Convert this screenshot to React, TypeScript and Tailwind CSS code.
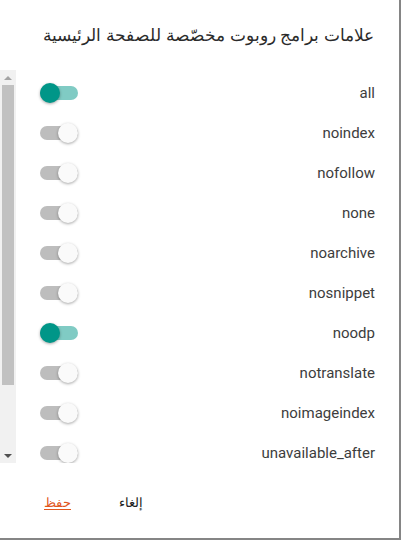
import { useState } from "react";

const tags: Array<readonly [string, boolean]> = [
  ["all", true],
  ["noindex", false],
  ["nofollow", false],
  ["none", false],
  ["noarchive", false],
  ["nosnippet", false],
  ["noodp", true],
  ["notranslate", false],
  ["noimageindex", false],
  ["unavailable_after", false],
];

function Toggle({ on, onClick }: { on: boolean; onClick: () => void }) {
  return (
    <button
      type="button"
      onClick={onClick}
      className={`relative h-[14px] w-[38px] shrink-0 rounded-full ${on ? "bg-[#80cbc4]" : "bg-[#bdbdbd]"}`}
    >
      <span
        className={`absolute top-[-3px] h-[20px] w-[20px] rounded-full shadow-[0_1px_3px_rgba(0,0,0,0.35)] ${
          on ? "left-0 bg-[#009688]" : "right-0 bg-[#fafafa]"
        }`}
      />
    </button>
  );
}

export default function App() {
  const [state, setState] = useState(tags.map(([, v]) => v));

  return (
    <div className="h-[540px] w-[402px] bg-white">
      <div
        dir="rtl"
        className="flex h-[540px] w-[401px] flex-col border-r-2 border-b-2 border-[#858585] bg-white"
      >
        <h2 className="whitespace-nowrap pr-[25px] pt-[22px] text-[17px] leading-[28px] text-[#2b2b2b] [font-family:'Liberation_Sans',Arial,sans-serif]">
          علامات برامج روبوت مخصّصة للصفحة الرئيسية
        </h2>

        <div className="mt-[20px] flex h-[393px] flex-row">
          <div className="flex-1 overflow-hidden pt-[3px]">
            {tags.map(([label], i) => (
              <div key={label} className="flex h-[40px] items-center justify-between pr-[24px] pl-[24px]">
                <span className="text-[15px] text-[#3d3d3d] [font-family:Roboto,sans-serif]">{label}</span>
                <Toggle
                  on={state[i]}
                  onClick={() => setState((s) => s.map((v, j) => (j === i ? !v : v)))}
                />
              </div>
            ))}
          </div>
          {/* scrollbar (left side in rtl) */}
          <div className="flex w-[16px] shrink-0 flex-col bg-[#f1f1f1]">
            <div className="flex h-[15px] items-center justify-center">
              <span className="h-0 w-0 border-x-[4px] border-b-[4px] border-x-transparent border-b-[#a3a3a3]" />
            </div>
            <div className="mx-[2px] h-[300px] bg-[#c1c1c1]" />
            <div className="flex-1" />
            <div className="flex h-[15px] items-center justify-center">
              <span className="h-0 w-0 border-x-[4px] border-t-[4px] border-x-transparent border-t-[#505050]" />
            </div>
          </div>
        </div>

        <div className="flex items-center gap-[20px] pl-[30px] pt-[30px] [font-family:'Liberation_Sans',Arial,sans-serif]" dir="ltr">
          <button type="button" className="px-[14px] text-[13px] text-[#e2571e] underline decoration-[#e2571e] underline-offset-2">
            حفظ
          </button>
          <button type="button" className="px-[14px] text-[13px] font-normal text-[#222]">
            إلغاء
          </button>
        </div>
      </div>
    </div>
  );
}
